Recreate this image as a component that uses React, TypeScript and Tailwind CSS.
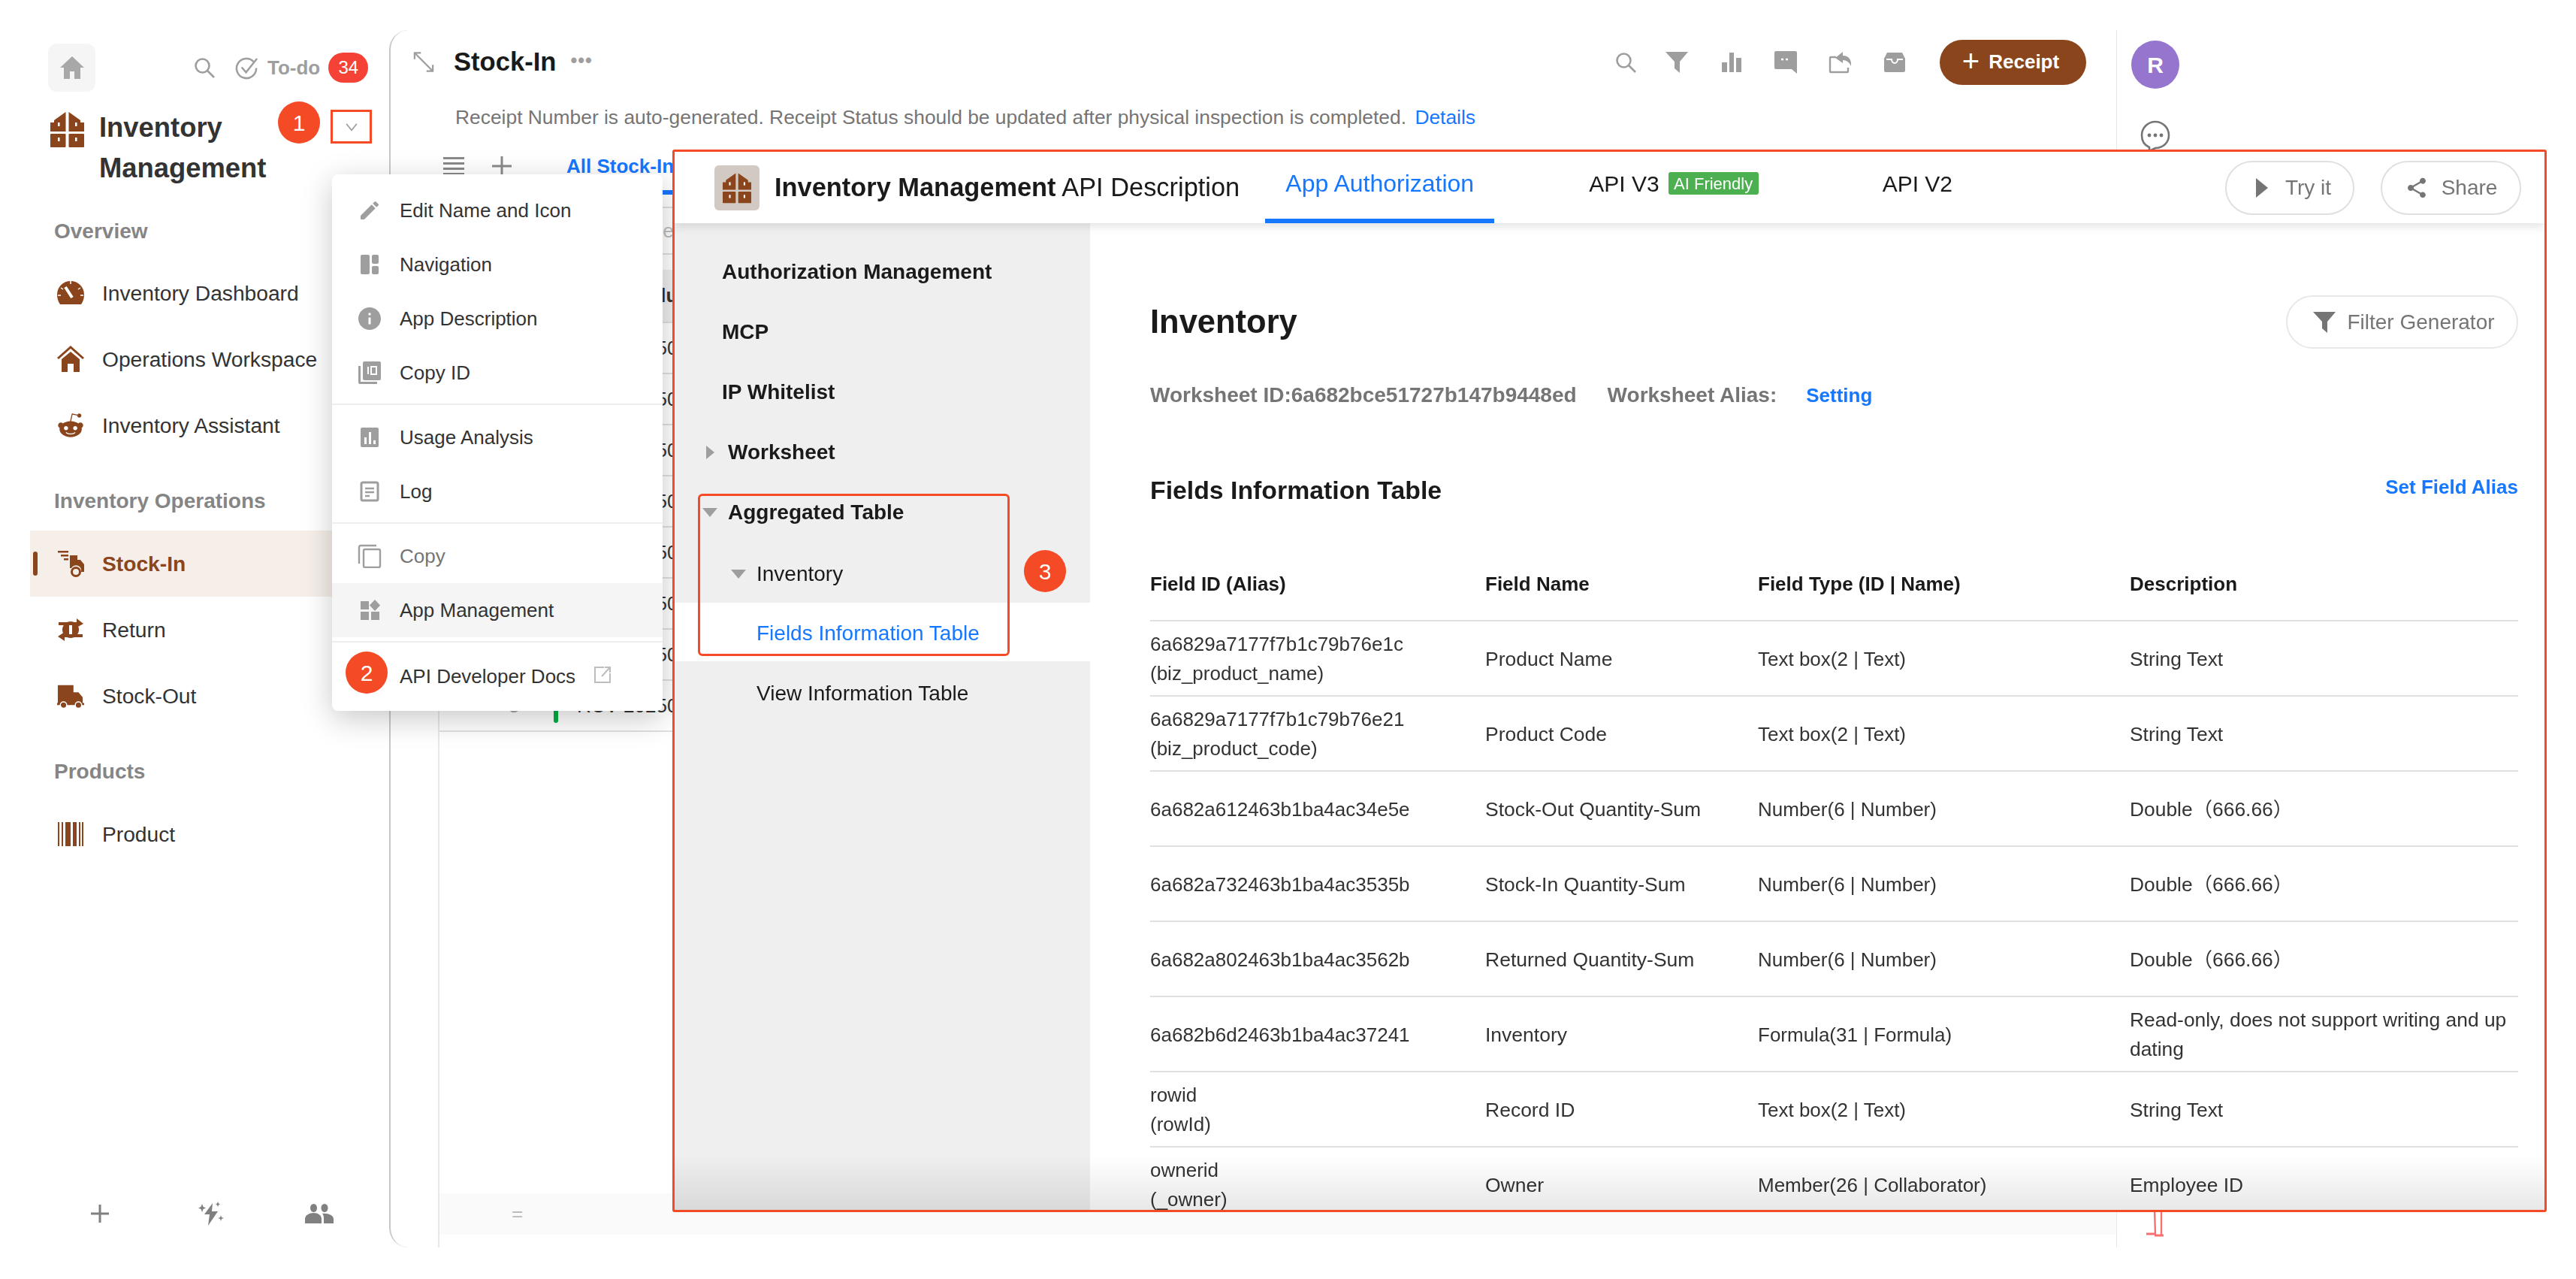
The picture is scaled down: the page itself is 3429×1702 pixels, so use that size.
import { FaRedditAlien } from "react-icons/fa"
import { MdEdit, MdInfo, MdShare } from "react-icons/md"
import type { ReactNode } from "react"

const brown = "#8b451c"
const gray = "#9e9e9e"

function LogoIcon({ className }: { className: string }) {
  return (
    <svg viewBox="0 0 45 48" className={className} fill={brown}>
      <path d="M20.5 1 L5 12 V15 H0 V27 H20.5Z" />
      <path d="M24.5 1 L40 12 V15 H45 V27 H24.5Z" />
      <rect x="0" y="30" width="20.5" height="18" rx="1" />
      <rect x="24.5" y="30" width="20.5" height="18" rx="1" />
      <g fill="#fff">
        <rect x="10" y="15" width="2.5" height="5" />
        <rect x="33" y="15" width="2.5" height="5" />
        <rect x="10" y="35" width="2.5" height="5" />
        <rect x="33" y="35" width="2.5" height="5" />
      </g>
    </svg>
  )
}

function GaugeIcon() {
  return (
    <svg viewBox="0 0 36 36" className="w-[36px] h-[36px]" fill={brown}>
      <path d="M4 33 C1 29 0 24 0 20 A18 18 0 0 1 36 20 C36 24 35 29 32 33Z" />
      <path d="M11 10 L20 24" stroke="#fff" strokeWidth="4" />
      <path d="M18 2 V6 M5 11 L8 13 M31 11 L28 13 M1 21 H5 M31 21 H35" stroke="#fff" strokeWidth="1.5" />
    </svg>
  )
}

function HouseIcon() {
  return (
    <svg viewBox="0 0 36 36" className="w-[36px] h-[36px]" fill={brown}>
      <path d="M1 17 L18 2 L35 17" fill="none" stroke={brown} strokeWidth="3" />
      <path d="M6 18 L18 8 L30 18 V35 H22 V24 H14 V35 H6Z" />
    </svg>
  )
}

function StockInIcon() {
  return (
    <svg viewBox="0 0 36 36" className="w-[36px] h-[36px]" fill={brown}>
      <rect x="1" y="1" width="14" height="2.5" />
      <rect x="5" y="6" width="10" height="2.5" />
      <rect x="9" y="11" width="6" height="2.5" />
      <path d="M17 7 H27 V13 H31 L36 19 V29 H32 A7 7 0 0 0 19 24 H17Z" />
      <circle cx="25" cy="29" r="5.5" fill="none" stroke={brown} strokeWidth="3" />
    </svg>
  )
}

function ReturnIcon() {
  return (
    <svg viewBox="0 0 36 36" className="w-[36px] h-[36px]" fill={brown}>
      <rect x="2" y="8" width="26" height="4" />
      <path d="M26 3 L35 10 L26 15Z" />
      <rect x="8" y="24" width="26" height="4" />
      <path d="M10 21 L1 27 L10 33Z" />
      <circle cx="18" cy="18" r="11" />
      <rect x="16" y="12" width="4" height="12" fill="#fff" />
    </svg>
  )
}

function TruckIcon() {
  return (
    <svg viewBox="0 0 38 36" className="w-[38px] h-[36px]" fill={brown}>
      <path d="M1 3 H23 V13 H30 L36 20 V28 H38 V31 H0 V28 H1Z" />
      <circle cx="9" cy="31" r="4.5" stroke="#fff" strokeWidth="1.5" />
      <circle cx="30" cy="31" r="4.5" stroke="#fff" strokeWidth="1.5" />
    </svg>
  )
}

function BarcodeIcon() {
  return (
    <svg viewBox="0 0 36 36" className="w-[36px] h-[36px]" fill={brown}>
      <rect x="1" y="2" width="2" height="32" />
      <rect x="6" y="2" width="2" height="32" />
      <rect x="11" y="2" width="7" height="32" />
      <rect x="21" y="2" width="5" height="32" />
      <rect x="29" y="2" width="2" height="32" />
      <rect x="33" y="2" width="2" height="32" />
    </svg>
  )
}

function SearchIcon({ className }: { className: string }) {
  return (
    <svg viewBox="0 0 28 28" className={className} fill="none" stroke={gray} strokeWidth="2.6">
      <circle cx="11.5" cy="11.5" r="9" />
      <path d="M18 18 L27 27" />
    </svg>
  )
}

function FunnelIcon({ className, color }: { className: string; color: string }) {
  return (
    <svg viewBox="0 0 32 30" className={className} fill={color}>
      <path d="M1 1 H31 L20 14 V29 L13 23 V14Z" />
    </svg>
  )
}

const menuIcon = "w-[32px] h-[32px]"

const menuSections: { label: string; icon: ReactNode; muted?: boolean; active?: boolean }[][] = [
  [
    { label: "Edit Name and Icon", icon: <MdEdit className={menuIcon} color={gray} /> },
    {
      label: "Navigation",
      icon: (
        <svg viewBox="0 0 32 32" className={menuIcon} fill={gray}>
          <rect x="4" y="3" width="12" height="26" rx="2" />
          <rect x="19" y="3" width="9" height="12" rx="2" />
          <rect x="19" y="18" width="9" height="11" rx="2" />
        </svg>
      ),
    },
    { label: "App Description", icon: <MdInfo className="w-[36px] h-[36px] -mx-[2px]" color={gray} /> },
    {
      label: "Copy ID",
      icon: (
        <svg viewBox="0 0 32 32" className={menuIcon} fill={gray}>
          <rect x="7" y="1" width="24" height="25" rx="2" />
          <path d="M1 7 H4 V28 H26 V31 H3 A2 2 0 0 1 1 29Z" />
          <rect x="13" y="8" width="2" height="10" fill="#fff" />
          <rect x="18" y="8" width="7" height="10" fill="none" stroke="#fff" strokeWidth="2" />
        </svg>
      ),
    },
  ],
  [
    {
      label: "Usage Analysis",
      icon: (
        <svg viewBox="0 0 32 32" className={menuIcon} fill={gray}>
          <rect x="4" y="3" width="24" height="26" rx="2" />
          <g fill="#fff">
            <rect x="9" y="16" width="3" height="9" />
            <rect x="15" y="9" width="3" height="16" />
            <rect x="21" y="20" width="3" height="5" />
          </g>
        </svg>
      ),
    },
    {
      label: "Log",
      icon: (
        <svg viewBox="0 0 32 32" className={menuIcon} fill="none" stroke={gray} strokeWidth="3">
          <rect x="5" y="4" width="22" height="24" rx="2" />
          <path d="M10 12 H22 M10 17 H22 M10 22 H16" strokeWidth="2.4" />
        </svg>
      ),
    },
  ],
  [
    {
      label: "Copy",
      muted: true,
      icon: (
        <svg viewBox="0 0 32 32" className={menuIcon} fill="none" stroke={gray} strokeWidth="2.4">
          <rect x="8" y="7" width="22" height="24" rx="2" />
          <path d="M25 2 H4 A2 2 0 0 0 2 4 V26" />
        </svg>
      ),
    },
    {
      label: "App Management",
      active: true,
      icon: (
        <svg viewBox="0 0 32 32" className={menuIcon} fill={gray}>
          <rect x="4" y="4" width="11" height="11" />
          <rect x="4" y="18" width="11" height="11" />
          <rect x="18" y="18" width="11" height="11" />
          <path d="M23 2 L30 9.5 L23 17 L16 9.5Z" />
        </svg>
      ),
    },
  ],
]

const fieldRows = [
  ["6a6829a7177f7b1c79b76e1c", "(biz_product_name)", "Product Name", "Text box(2 | Text)", "String Text"],
  ["6a6829a7177f7b1c79b76e21", "(biz_product_code)", "Product Code", "Text box(2 | Text)", "String Text"],
  ["6a682a612463b1ba4ac34e5e", "", "Stock-Out Quantity-Sum", "Number(6 | Number)", "Double（666.66）"],
  ["6a682a732463b1ba4ac3535b", "", "Stock-In Quantity-Sum", "Number(6 | Number)", "Double（666.66）"],
  ["6a682a802463b1ba4ac3562b", "", "Returned Quantity-Sum", "Number(6 | Number)", "Double（666.66）"],
  ["6a682b6d2463b1ba4ac37241", "", "Inventory", "Formula(31 | Formula)", "Read-only, does not support writing and updating"],
  ["rowid", "(rowId)", "Record ID", "Text box(2 | Text)", "String Text"],
  ["ownerid", "(_owner)", "Owner", "Member(26 | Collaborator)", "Employee ID"],
]

function Badge({ n, className }: { n: number; className: string }) {
  return (
    <div className={`absolute w-[56px] h-[56px] rounded-full bg-[#f44a25] text-white text-[30px] flex items-center justify-center ${className}`}>
      {n}
    </div>
  )
}

function NavRow({ icon, label, active }: { icon: ReactNode; label: string; active?: boolean }) {
  return (
    <div className={`relative ml-[40px] h-[88px] pl-[36px] flex items-center ${active ? "bg-[#f5eee9]" : ""}`}>
      {active && <div className="absolute left-[4px] top-[28px] w-[6px] h-[32px] rounded-full bg-[#8b451c]" />}
      <div className="w-[36px] flex justify-center shrink-0">{icon}</div>
      <span className={`ml-[24px] pt-[1px] text-[28.2px] ${active ? "font-bold text-[#8b451c]" : "text-[#333]"}`}>{label}</span>
    </div>
  )
}

function SectionLabel({ className, children }: { className: string; children: ReactNode }) {
  return <div className={`h-[40px] pl-[72px] leading-[40px] text-[28px] font-bold text-[#858585] ${className}`}>{children}</div>
}

function Sidebar() {
  return (
    <div className="relative w-[518px] h-[1702px] shrink-0 pt-[58px] flex flex-col">
      <div className="h-[64px] pl-[64px] flex items-center">
        <div className="w-[63px] h-[64px] rounded-[12px] bg-[#f5f5f5] flex items-center justify-center">
          <svg viewBox="0 0 34 34" className="w-[34px] h-[34px]" fill="#a8a8a8">
            <path d="M17 2 L33 17 H28 V32 H20 V22 H14 V32 H6 V17 H1Z" />
          </svg>
        </div>
        <SearchIcon className="ml-[131px] w-[28px] h-[28px]" />
        <svg viewBox="0 0 32 32" className="ml-[27px] w-[31px] h-[31px]" fill="none" stroke={gray} strokeWidth="2.6">
          <path d="M26 8 A13.5 13.5 0 1 0 29 16" />
          <path d="M9 15 L15 22 L30 3" />
        </svg>
        <span className="ml-[12px] text-[26px] font-bold text-[#9e9e9e]">To-do</span>
        <span className="ml-[11px] w-[53px] h-[40px] rounded-full bg-[#f44336] text-white text-[24px] flex items-center justify-center">34</span>
      </div>
      <div className="mt-[21px] pl-[67px] flex items-start">
        <LogoIcon className="mt-[5px] w-[45px] h-[48px] shrink-0" />
        <div className="ml-[20px] text-[36.4px] leading-[54px] font-bold text-[#333]">
          Inventory
          <br />
          Management
        </div>
      </div>
      <SectionLabel className="mt-[37px]">Overview</SectionLabel>
      <div className="mt-[18px]">
        <NavRow icon={<GaugeIcon />} label="Inventory Dashboard" />
        <NavRow icon={<HouseIcon />} label="Operations Workspace" />
        <NavRow icon={<FaRedditAlien size={38} color={brown} />} label="Inventory Assistant" />
      </div>
      <SectionLabel className="mt-[37px]">Inventory Operations</SectionLabel>
      <div className="mt-[19px]">
        <NavRow active icon={<StockInIcon />} label="Stock-In" />
        <NavRow icon={<ReturnIcon />} label="Return" />
        <NavRow icon={<TruckIcon />} label="Stock-Out" />
      </div>
      <SectionLabel className="mt-[37px]">Products</SectionLabel>
      <div className="mt-[19px]">
        <NavRow icon={<BarcodeIcon />} label="Product" />
      </div>
      <div className="mt-auto pb-[70px] pl-[120px] flex items-center">
        <svg viewBox="0 0 26 26" className="w-[26px] h-[26px]" fill="#808080">
          <rect x="11.5" y="1" width="3" height="24" />
          <rect x="1" y="11.5" width="24" height="3" />
        </svg>
        <svg viewBox="0 0 34 32" className="ml-[118px] w-[34px] h-[34px]" fill="#808080">
          <path d="M19 2 L8 17 H15 L13 32 L26 13 H18Z" />
          <path d="M5 3 L6.5 7 L10 8.5 L6.5 10 L5 14 L3.5 10 L0 8.5 L3.5 7Z" />
          <path d="M26 0 L27 2.5 L29 3.5 L27 4.5 L26 7 L25 4.5 L23 3.5 L25 2.5Z" />
          <path d="M30 18 L31 21 L34 22 L31 23 L30 26 L29 23 L26 22 L29 21Z" />
        </svg>
        <svg viewBox="0 0 38 26" className="ml-[108px] w-[38px] h-[26px]" fill="#808080">
          <ellipse cx="11.5" cy="5.5" rx="4.5" ry="5.5" />
          <ellipse cx="26" cy="5.5" rx="4.5" ry="5.5" />
          <path d="M0 26 V20 C0 15 6 12 11.5 12 C17 12 22 15 22 20 V26Z" />
          <path d="M25 26 V19 C25 16 24 14 23 13 C30 12 38 15 38 20 V26Z" />
        </svg>
      </div>
      <div className="absolute left-[370px] top-[135px]">
        <Badge n={1} className="left-0 top-0" />
        <div className="absolute left-[70px] top-[11px] w-[55px] h-[45px] border-[3px] border-[#f44a25] flex items-center justify-center">
          <svg viewBox="0 0 20 14" className="w-[18px] h-[12px]" fill="none" stroke={gray} strokeWidth="2">
            <path d="M2 2 L10 12 L18 2" />
          </svg>
        </div>
      </div>
    </div>
  )
}

function AppMenu() {
  return (
    <div className="absolute left-[442px] top-[232px] w-[440px] h-[714px] pt-[5px] rounded-[8px] bg-white shadow-[0_10px_40px_rgba(0,0,0,0.22)] z-10">
      {menuSections.map((section, i) => (
        <div key={i} className="pt-[7px] pb-[5px] border-b-[2px] border-[#eeeeee]">
          {section.map((item) => (
            <div key={item.label} className={`h-[72px] pl-[34px] flex items-center ${item.active ? "bg-[#f5f5f5]" : ""}`}>
              <div className="w-[32px] flex justify-center">{item.icon}</div>
              <span className={`ml-[24px] text-[26px] ${item.muted ? "text-[#757575]" : "text-[#333]"}`}>{item.label}</span>
            </div>
          ))}
        </div>
      ))}
      <div className="relative h-[72px] mt-[9px] pl-[90px] flex items-center">
        <Badge n={2} className="left-[18px] top-[3px]" />
        <span className="text-[26px] text-[#333]">API Developer Docs</span>
        <svg viewBox="0 0 24 24" className="ml-[24px] -mt-[4px] w-[24px] h-[24px]" fill="none" stroke="#bdbdbd" strokeWidth="2">
          <path d="M14 2 H2 V22 H22 V10 M11 14 L22 2 M15 2 H22 V9" />
        </svg>
      </div>
    </div>
  )
}

function MainPanel() {
  const toolbarIcon = "w-[30px] h-[30px]"
  return (
    <div className="mt-[40px] w-[2299px] h-[1620px] shrink-0 rounded-l-[26px] border-l-[2px] border-[#c8c8c8] overflow-hidden flex flex-col">
      <div className="pt-[12px] pl-[30px] pr-[40px] h-[72px] flex items-center">
        <svg viewBox="0 0 30 30" className="w-[28px] h-[29px]" fill="none" stroke={gray} strokeWidth="2.4">
          <path d="M3 3 L27 27 M2 11 V2 H11 M28 19 V28 H19" />
        </svg>
        <span className="ml-[26px] pt-[2px] text-[34.6px] font-bold text-[#1a1a1a]">Stock-In</span>
        <span className="ml-[19px] -mt-[4px] text-[#9e9e9e] text-[25px] tracking-[1px] font-bold leading-none">•••</span>
        <div className="ml-auto pt-[1px] flex items-center gap-[42px]">
          <SearchIcon className="-mr-[4px] w-[28px] h-[28px]" />
          <FunnelIcon className="w-[32px] h-[30px]" color={gray} />
          <svg viewBox="0 0 30 30" className={toolbarIcon} fill={gray}>
            <rect x="2" y="15" width="7" height="13" />
            <rect x="12" y="2" width="6" height="26" />
            <rect x="21" y="9" width="7" height="19" />
          </svg>
          <svg viewBox="0 0 30 30" className={toolbarIcon} fill={gray}>
            <path d="M2 0 H28 A2 2 0 0 1 30 2 V30 L23 24 H2 A2 2 0 0 1 0 22 V2 A2 2 0 0 1 2 0Z" />
            <path d="M9 11 H21" stroke="#fff" strokeWidth="2.4" strokeDasharray="3 3" />
          </svg>
          <svg viewBox="0 0 32 30" className="w-[32px] h-[30px]" fill={gray}>
            <path d="M10 8 H3 A1 1 0 0 0 2 9 V27 A1 1 0 0 0 3 28 H25 A1 1 0 0 0 26 27 V22" fill="none" stroke={gray} strokeWidth="2.4" />
            <path d="M19 1 L9 9 L19 16 V12 C24 12 28 15 30 20 C31 12 27 6 19 6Z" />
          </svg>
          <svg viewBox="0 0 28 26" className="w-[28px] h-[26px]" fill={gray}>
            <path d="M4 0 H24 L28 8 V24 A2 2 0 0 1 26 26 H2 A2 2 0 0 1 0 24 V8Z" />
            <path d="M3 9 H10 C10 12 12 14 14 14 C16 14 18 12 18 9 H25" fill="none" stroke="#fff" strokeWidth="2" />
          </svg>
          <button className="w-[195px] h-[60px] ml-[4px] pr-[6px] rounded-full bg-[#8b451c] text-white text-[26px] font-bold flex items-center justify-center">
            <span className="text-[40px] font-normal leading-none mr-[12px] -mt-[4px]">+</span>
            Receipt
          </button>
        </div>
      </div>
      <div className="mt-[24px] pl-[86px] h-[40px] leading-[40px] text-[26.4px] text-[#757575]">
        Receipt Number is auto-generated. Receipt Status should be updated after physical inspection is completed.{" "}
        <span className="ml-[4px] text-[#1677ff]">Details</span>
      </div>
      <div className="mt-[14px] h-[69px] pl-[70px] flex items-center whitespace-nowrap">
        <svg viewBox="0 0 28 24" className="-mt-[8px] w-[28px] h-[24px]" fill="#8a8a8a">
          <rect y="0" width="28" height="3" />
          <rect y="7" width="28" height="3" />
          <rect y="14" width="28" height="3" />
          <rect y="21" width="28" height="3" />
        </svg>
        <svg viewBox="0 0 26 26" className="ml-[37px] -mt-[8px] w-[26px] h-[26px]" fill="#8a8a8a">
          <rect x="11.5" y="0" width="3" height="26" />
          <rect x="0" y="11.5" width="26" height="3" />
        </svg>
        <div className="ml-[60px] self-stretch w-[400px] pl-[13px] border-b-[6px] border-[#1677ff] text-[26px] font-bold text-[#1677ff] flex items-center">
          All Stock-In
        </div>
      </div>
      <div className="ml-[63px] flex-1 border-l-[2px] border-[#e8e8e8] flex flex-col">
        <div className="mt-[16px] h-[64px] border-y-[2px] border-[#e0e0e0] pl-[280px] text-[26px] text-[#bdbdbd] flex items-center">Search</div>
        <div className="mt-[20px] h-[71px] border-b-[2px] border-[#e0e0e0] bg-[#eeeeee] pl-[264px] text-[26px] font-bold text-[#333] flex items-center">Value</div>
        {[1, 2, 3, 4, 5, 6, 7, 8].map((n) => (
          <div key={n} className="relative h-[68px] border-b-[2px] border-[#e0e0e0] text-[26px] text-[#333] flex items-center whitespace-nowrap">
            <span className="absolute left-[92px] text-[#9e9e9e]">{n}</span>
            <span className="absolute left-[152px] top-[12px] w-[6px] h-[44px] rounded-full bg-[#00b140]" />
            <span className="absolute left-[183px]">RCV 202506</span>
          </div>
        ))}
        <div className="mt-auto mb-[17px] h-[55px] bg-[#fafafa] pl-[96px] flex items-center text-[26px] text-[#bbbbbb]">=</div>
      </div>
    </div>
  )
}

function RightPanel() {
  return (
    <div className="mt-[40px] w-[612px] h-[1620px] shrink-0 border-l-[1px] border-[#e8e8e8] pt-[14px] pl-[19px] pb-[14px] flex flex-col">
      <div className="w-[64px] h-[64px] rounded-full bg-[#9575cd] text-white text-[30px] font-bold flex items-center justify-center">R</div>
      <svg viewBox="0 0 40 42" className="mt-[42px] ml-[12px] w-[40px] h-[42px]" fill="none" stroke="#757575" strokeWidth="2.6">
        <path d="M12 36 C5 33 2 27 2 20 C2 10 10 2 20 2 C30 2 38 10 38 20 C38 30 30 37 20 37 L12 41Z" />
        <g fill="#757575" stroke="none">
          <circle cx="12" cy="20" r="2.4" />
          <circle cx="20" cy="20" r="2.4" />
          <circle cx="28" cy="20" r="2.4" />
        </g>
      </svg>
      <svg viewBox="0 0 40 36" className="mt-auto ml-[13px] w-[40px] h-[36px]" fill="none" stroke="#f87171" strokeWidth="2.4">
        <path d="M18 0 L19 33 M27 0 L27 34" />
        <path d="M7 32 H19 M18 34 H30" strokeWidth="3" />
      </svg>
    </div>
  )
}

function ApiPanel() {
  return (
    <div className="absolute left-[895px] top-[199px] w-[2495px] h-[1414px] border-[3px] border-[#f44a25] rounded-[3px] bg-white overflow-hidden flex flex-col z-20">
      <div className="relative z-10 h-[95px] shrink-0 pl-[53px] pr-[31px] bg-white shadow-[0_4px_12px_rgba(0,0,0,0.12)] flex items-center whitespace-nowrap">
        <div className="w-[60px] h-[60px] rounded-[6px] bg-[#d1c9c2] flex items-center justify-center">
          <LogoIcon className="w-[38px] h-[42px]" />
        </div>
        <div className="ml-[20px] text-[34.4px] text-[#1a1a1a]">
          <span className="font-bold">Inventory Management</span> API Description
        </div>
        <div className="ml-[34px] w-[305px] h-[95px] pb-[5px] border-b-[6px] border-[#1677ff] text-[32px] text-[#1677ff] flex items-center justify-center">
          App Authorization
        </div>
        <div className="ml-[126px] flex items-center pb-[11px] text-[30px] text-[#1a1a1a]">
          API V3
          <span className="ml-[12px] w-[120px] h-[30px] rounded-[3px] bg-[#4caf50] text-white text-[22px] flex items-center justify-center">AI Friendly</span>
        </div>
        <div className="ml-[165px] pb-[11px] text-[30px] text-[#1a1a1a]">API V2</div>
        <div className="ml-auto flex items-center gap-[35px] text-[28px] text-[#757575]">
          <button className="w-[172px] h-[72px] pl-[10px] rounded-full border-[2px] border-[#e0e0e0] flex items-center justify-center">
            <svg viewBox="0 0 16 28" className="w-[16px] h-[28px]" fill="#757575">
              <path d="M0 1 L16 14 L0 27Z" />
            </svg>
            <span className="ml-[23px]">Try it</span>
          </button>
          <button className="w-[187px] h-[72px] rounded-full border-[2px] border-[#e0e0e0] flex items-center justify-center">
            <MdShare size={32} color="#757575" />
            <span className="ml-[17px]">Share</span>
          </button>
        </div>
      </div>
      <div className="flex-1 flex min-h-0">
        <div className="relative w-[553px] shrink-0 bg-[#efefef] pt-[25px] text-[28px] text-[#1a1a1a]">
          <div className="h-[80px] pl-[63px] flex items-center font-bold">Authorization Management</div>
          <div className="h-[80px] pl-[63px] flex items-center font-bold">MCP</div>
          <div className="h-[80px] pl-[63px] flex items-center font-bold">IP Whitelist</div>
          <div className="h-[80px] pl-[42px] flex items-center font-bold">
            <span className="w-0 h-0 border-y-[9px] border-y-transparent border-l-[11px] border-l-[#9e9e9e]" />
            <span className="ml-[18px]">Worksheet</span>
          </div>
          <div className="h-[80px] pl-[37px] flex items-center font-bold">
            <span className="w-0 h-0 border-x-[10px] border-x-transparent border-t-[12px] border-t-[#9e9e9e]" />
            <span className="ml-[14px]">Aggregated Table</span>
          </div>
          <div className="h-[80px] pl-[75px] pt-[4px] flex items-center">
            <span className="w-0 h-0 border-x-[10px] border-x-transparent border-t-[12px] border-t-[#9e9e9e]" />
            <span className="ml-[14px]">Inventory</span>
          </div>
          <div className="h-[78px] pl-[109px] pt-[4px] bg-white text-[#1677ff] flex items-center">Fields Information Table</div>
          <div className="h-[86px] pl-[109px] flex items-center">View Information Table</div>
          <div className="absolute left-[31px] top-[360px] w-[415px] h-[216px] border-[3px] border-[#f44a25] rounded-[6px]" />
          <Badge n={3} className="left-[465px] top-[435px]" />
        </div>
        <div className="flex-1 min-w-0 pl-[80px] pr-[35px] pt-[96px] overflow-hidden">
          <div className="h-[71px] flex items-center justify-between">
            <span className="pt-[1px] text-[43.5px] font-bold text-[#1a1a1a]">Inventory</span>
            <button className="w-[309px] h-[71px] pl-[4px] pt-[1px] rounded-full border-[2px] border-[#e8e8e8] text-[28px] text-[#757575] flex items-center justify-center">
              <FunnelIcon className="w-[32px] h-[30px]" color="#757575" />
              <span className="ml-[14px]">Filter Generator</span>
            </button>
          </div>
          <div className="mt-[42px] h-[40px] flex items-center text-[28px] font-bold text-[#757575]">
            <span>Worksheet ID:6a682bce51727b147b9448ed</span>
            <span className="ml-[41px]">Worksheet Alias:</span>
            <span className="ml-[39px] text-[26px] text-[#1677ff]">Setting</span>
          </div>
          <div className="mt-[86px] h-[40px] flex items-center justify-between">
            <span className="text-[33.8px] font-bold text-[#1a1a1a]">Fields Information Table</span>
            <span className="-mt-[8px] text-[26px] font-bold text-[#1677ff]">Set Field Alias</span>
          </div>
          <div className="mt-[55px] text-[26px] text-[#333]">
            <div className="h-[100px] pt-[2px] border-b-[2px] border-[#e0e0e0] grid grid-cols-[446px_363px_495px_1fr] items-center font-bold text-[#1a1a1a]">
              <span>Field ID (Alias)</span>
              <span>Field Name</span>
              <span>Field Type (ID | Name)</span>
              <span>Description</span>
            </div>
            {fieldRows.map((row) => (
              <div key={row[0]} className="h-[100px] pt-[2px] border-b-[2px] border-[#e0e0e0] grid grid-cols-[446px_363px_495px_511px] items-center leading-[39px]">
                <span>
                  {row[0]}
                  {row[1] && <br />}
                  {row[1]}
                </span>
                <span className="text-[26.5px]">{row[2]}</span>
                <span>{row[3]}</span>
                <span className="break-all text-[26.4px]">{row[4]}</span>
              </div>
            ))}
          </div>
        </div>
      </div>
      <div className="absolute left-0 right-0 bottom-0 h-[72px] bg-gradient-to-b from-white to-[#e8e8e8] mix-blend-multiply pointer-events-none" />
    </div>
  )
}

export default function App() {
  return (
    <div className="relative w-[3429px] h-[1702px] overflow-hidden bg-white font-['Liberation_Sans','Noto_Sans_CJK_SC',sans-serif] flex">
      <Sidebar />
      <MainPanel />
      <RightPanel />
      <AppMenu />
      <ApiPanel />
    </div>
  )
}
